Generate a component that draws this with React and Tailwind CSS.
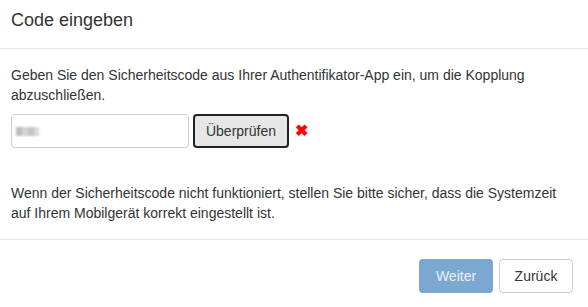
export default function App() {
  return (
    <div className="w-[588px] h-[307px] bg-white text-[#333] text-[14px] leading-[20px] overflow-hidden" style={{ fontFamily: '"Liberation Sans", Arial, sans-serif' }}>
      <div className="h-[49px] border-b border-[#e5e5e5] px-[11px] pt-[7px]">
        <h4 className="text-[18px] leading-[26px] m-0">Code eingeben</h4>
      </div>
      <div className="px-[11px] pt-[16px] pb-[15px] h-[190px]">
        <p className="mb-[9px] pr-[20px]">Geben Sie den Sicherheitscode aus Ihrer Authentifikator-App ein, um die Kopplung abzuschließen.</p>
        <div className="flex items-center">
          <div className="w-[178px] h-[34px] border border-[#ccc] rounded-[4px] flex items-center pl-[4px]">
            <div className="flex gap-0 blur-[1.2px]">
              <div className="w-[6px] h-[9px] bg-[#bbb]"></div>
              <div className="w-[6px] h-[9px] bg-[#d2d2d2]"></div>
              <div className="w-[6px] h-[9px] bg-[#c4c4c4]"></div>
              <div className="w-[5px] h-[9px] bg-[#dadada]"></div>
            </div>
          </div>
          <button className="ml-[4px] w-[96px] h-[34px] bg-[#e6e6e6] border-2 border-[#222] rounded-[4px] text-[14px] text-[#333] flex items-center justify-center">Überprüfen</button>
          <span className="ml-[6px] text-[#f00] text-[16px] font-bold leading-none">✖</span>
        </div>
        <p className="mt-[35px]">Wenn der Sicherheitscode nicht funktioniert, stellen Sie bitte sicher, dass die Systemzeit auf Ihrem Mobilgerät korrekt eingestellt ist.</p>
      </div>
      <div className="border-t border-[#e5e5e5] px-[15px] pt-[19px] flex justify-end gap-[6px]">
        <button className="w-[74px] h-[34px] rounded-[4px] bg-[#337ab7]/65 text-white/85 text-[14px]">Weiter</button>
        <button className="w-[74px] h-[34px] rounded-[4px] bg-white border border-[#ccc] text-[#333] text-[14px]">Zurück</button>
      </div>
    </div>
  );
}
